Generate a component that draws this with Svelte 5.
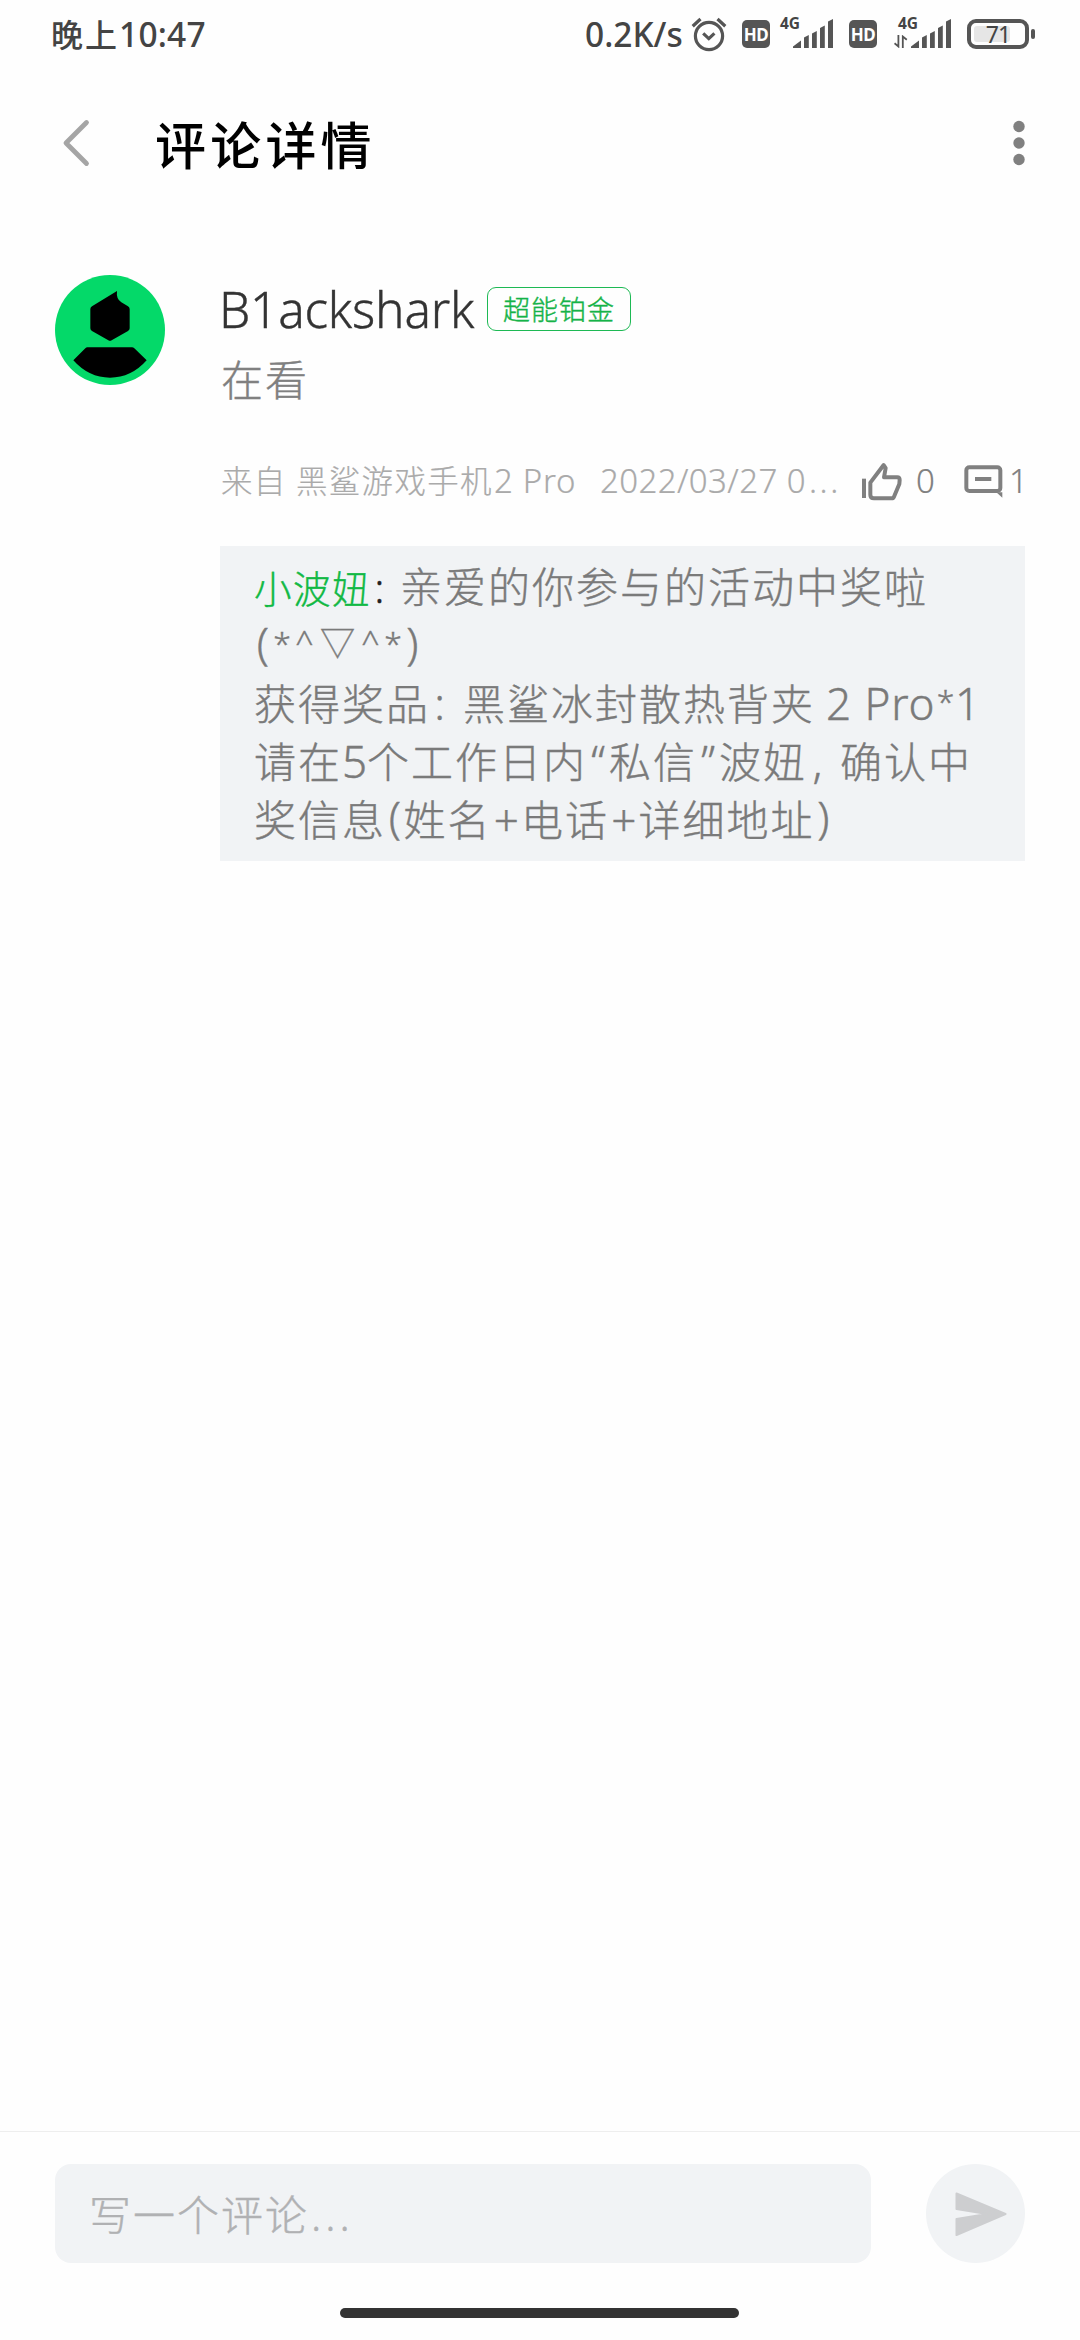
<script>
  // Reply text, split into runs; a run with a kind sits in a fixed-width cell.
  const reply = [
    [
      { t: '小波妞', k: 'author' },
      { t: ':', k: 'sep' },
      { t: '亲爱的你参与的活动中奖啦' }
    ],
    [
      { t: '(', k: 'paren' },
      { t: '*', k: 'star' },
      { t: '^', k: 'caret' },
      { t: '▽', k: 'tri' },
      { t: '^', k: 'caret' },
      { t: '*', k: 'star' },
      { t: ')', k: 'paren' }
    ],
    [
      { t: '获得奖品' },
      { t: ':', k: 'colon' },
      { t: '黑鲨冰封散热背夹' },
      { t: '2 Pro', k: 'latin' },
      { t: '*', k: 'star tight' },
      { t: '1', k: 'one' }
    ],
    [
      { t: '请在' },
      { t: '5', k: 'digit' },
      { t: '个工作日内' },
      { t: '“', k: 'quote' },
      { t: '私信' },
      { t: '”', k: 'quote' },
      { t: '波妞' },
      { t: ',', k: 'comma' },
      { t: '确认中' }
    ],
    [
      { t: '奖信息' },
      { t: '(', k: 'paren' },
      { t: '姓名' },
      { t: '+', k: 'plus' },
      { t: '电话' },
      { t: '+', k: 'plus' },
      { t: '详细地址' },
      { t: ')', k: 'paren' }
    ]
  ];
</script>

{#snippet bars()}
  <svg class="bars" width="40" height="25" viewBox="0 0 40 25">
    <path d="M0 25v-1.500L8 17.500V25zM11 25v-10.500l4.800-2.600V25zM19 25V10.400l4.800-2.400V25zM27 25V5L31.800 2.500V25zM35 25V-1.500L40-4V25z" fill="#555" />
  </svg>
{/snippet}

<div class="screen">
  <div class="status">
    <span class="time"><span class="cn">晚上</span>10:47</span>
    <span class="speed">0.2K/s</span>
    <svg class="alarm" width="36" height="36" viewBox="0 0 36 36" fill="none" stroke="#555" stroke-width="3.200">
      <circle cx="18" cy="20" r="13.600" />
      <path d="M12.200 17.400l5.600 5.200 5.600-5.200M1.700 10.200L9.500 3M26.500 3l7.800 7.200" />
    </svg>
    <span class="hd first">HD</span>
    <span class="signal one-way"><span class="net">4G</span>{@render bars()}</span>
    <span class="hd second">HD</span>
    <span class="signal two-way">
      <span class="net">4G</span>
      <svg class="arrows" width="14" height="13" viewBox="0 0 14 13" fill="none" stroke="#555" stroke-width="1.800">
        <path d="M4.400 0v11.500L.5 8.300M8.800 13V1.500l4 3.200" />
      </svg>
      {@render bars()}
    </span>
    <span class="battery"><span class="charge"></span><span class="level">71</span></span>
    <span class="nub"></span>
  </div>

  <header>
    <svg class="back" width="28" height="50" viewBox="0 0 28 50" fill="none" stroke="#a5a5a5" stroke-width="4.800" stroke-linecap="round" stroke-linejoin="round">
      <path d="M24.500 4.500L4 25l20.500 20.500" />
    </svg>
    <h1>评论详情</h1>
    <svg class="more" width="12" height="46" viewBox="0 0 12 46" fill="#808080">
      <circle cx="6" cy="6.500" r="5.700" /><circle cx="6" cy="23" r="5.700" /><circle cx="6" cy="39.500" r="5.700" />
    </svg>
  </header>

  <main>
    <svg class="avatar" width="110" height="110" viewBox="0 0 330 330">
      <circle cx="165" cy="165" r="165" fill="#04d969" />
      <path d="M186 48Q183 72 199 82L219 94Q224 97 224 102V160Q224 165 219 168L170 196Q165 199 160 196L111 168Q106 165 106 160V102Q106 97 111 94zM97 217H231Q235 217 238 220L275 256Q229 308 165 308T55 256L91 220Q94 217 97 217z" />
    </svg>
    <div class="content">
      <div class="who"><span class="name">B1ackshark</span><span class="badge">超能铂金</span></div>
      <p class="text">在看</p>
      <div class="meta">
        <span class="from">来自</span><span class="device">黑鲨游戏手机</span><span class="model">2 Pro</span>
        <span class="date">2022/03/27 0<span class="dots">...</span></span>
        <svg class="like" width="42" height="45" viewBox="0 0 126 135" fill="none" stroke="#808080" stroke-width="12">
          <path d="M6 68v58" />
          <path d="M25 80L65 27l6 9-5 28h40q7 0 7 8l-1 12-16 38q-2 5-7 5H36q-11 0-11-11z" stroke-linejoin="round" />
        </svg>
        <span class="likes">0</span>
        <svg class="reply-icon" width="39" height="33" viewBox="0 0 117 99" fill="none" stroke="#808080" stroke-width="12">
          <rect x="7" y="7" width="102" height="71" rx="9" />
          <path d="M33 42h49" />
          <path d="M97 82h18v16z" fill="#808080" stroke="none" />
        </svg>
        <span class="replies">1</span>
      </div>
      <div class="reply">
        {#each reply as line}
          <div class="line">{#each line as run}<span class={run.k ?? 'han'}>{run.t}</span>{/each}</div>
        {/each}
      </div>
    </div>
  </main>

  <footer>
    <div class="composer">
      <div class="input">写一个评论<span class="dots">...</span></div>
      <div class="send">
        <svg width="52" height="44" viewBox="0 0 52 44" fill="#cdced0" stroke="#cdced0" stroke-width="2" stroke-linejoin="round">
          <path d="M1.500 1.500L50.500 22 1.500 43V27L32 22 1.500 17z" />
        </svg>
      </div>
    </div>
    <div class="home"></div>
  </footer>
</div>

<style>
  :global(body) { background: #fefefe; }
  .screen {
    width: 1080px;
    height: 2340px;
    display: flex;
    flex-direction: column;
    overflow: hidden;
    background: #fefefe;
    font-family: 'Noto Sans', 'Noto Sans CJK SC', sans-serif;
    font-weight: 300;
    white-space: nowrap;
  }
  .screen :global(svg) { flex: none; display: block; }

  .status {
    height: 70px;
    display: flex;
    align-items: center;
    padding-left: 51px;
    color: #444;
    font-weight: 500;
  }
  .time, .speed { font-size: 33.500px; line-height: 69px; height: 70px; flex: none; }
  .time { width: 534px; letter-spacing: 0.200px; }
  .cn { font-size: 32px; letter-spacing: 2px; }
  .speed { width: 106px; }
  .alarm { margin-top: -2px; }
  .hd {
    flex: none;
    width: 28px;
    height: 28px;
    border-radius: 5px;
    background: #555;
    color: #fff;
    font: 700 17px/29px 'Noto Sans', sans-serif;
    text-align: center;
    letter-spacing: -0.500px;
    margin-top: -2px;
  }
  .hd.first { margin-left: 15px; }
  .hd.second { margin-left: 15px; }
  .signal {
    position: relative;
    flex: none;
    display: flex;
    justify-content: flex-end;
    align-items: flex-end;
    height: 31px;
    margin-top: -5px;
  }
  .signal.one-way { width: 53px; margin-left: 10px; margin-right: 1px; }
  .signal.two-way { width: 57px; margin-left: 17px; }
  .bars { overflow: visible; }
  .net { position: absolute; top: -3px; font: 700 15.500px/18px 'Noto Sans', sans-serif; }
  .one-way .net { left: 0; }
  .two-way .net { left: 4px; }
  .arrows { margin-right: 3px; }
  .battery {
    position: relative;
    flex: none;
    box-sizing: border-box;
    width: 62px;
    height: 30px;
    margin: -2px 0 0 16px;
    border: 4px solid #555;
    border-radius: 9px;
    padding: 3px;
  }
  .charge { display: block; width: 36px; height: 16px; border-radius: 3px; background: #e6e6e6; }
  .level { position: absolute; inset: 0; font: 400 23px/22px 'Noto Sans', sans-serif; text-align: center; letter-spacing: -1px; }
  .nub { width: 4px; height: 10px; margin: -2px 0 0 2px; border-radius: 2px; background: #555; }

  header { height: 146px; display: flex; align-items: center; padding: 0 55px 0 62px; }
  h1 { flex: 1; margin: 4px 0 0 65px; font-size: 51px; line-height: 70px; font-weight: 500; letter-spacing: 4.200px; color: #000; }

  main { flex: 1; display: flex; align-items: flex-start; padding: 59px 55px 0; }
  .content { width: 805px; margin-left: 55px; -webkit-text-stroke-width: 0.400px; }
  .who { display: flex; height: 72px; }
  .name { width: 264px; font-size: 49.500px; line-height: 69px; letter-spacing: -0.200px; color: #333; text-indent: -1px; }
  .badge {
    box-sizing: border-box;
    width: 144px;
    height: 44px;
    margin: 12px 0 0 3px;
    border: 1.500px solid #1db954;
    border-radius: 9px;
    color: #15b348;
    font-size: 27px;
    line-height: 43px;
    letter-spacing: 1px;
    text-align: center;
  }
  .text { margin: 1px 0 0 1px; font-size: 42px; line-height: 63px; letter-spacing: 2px; color: #808080; }
  .meta { display: flex; align-items: center; height: 60px; margin-top: 40px; font-size: 33px; line-height: 60px; color: #aaa; -webkit-text-stroke-width: 0.200px; }
  .meta > span { flex: none; }
  .from { width: 76px; padding-left: 1px; box-sizing: border-box; }
  .from, .device { font-size: 31.500px; letter-spacing: 1.300px; }
  .device { width: 198px; }
  .model { width: 106px; letter-spacing: 0.700px; }
  .date { width: 262px; letter-spacing: 0.400px; }
  .meta .dots { letter-spacing: 2.600px; margin-left: 3px; }
  .like { margin-top: -6px; }
  .likes, .replies { color: #808080; }
  .likes { width: 48px; margin-left: 12px; }
  .replies { margin-left: 6px; }

  .reply { box-sizing: border-box; height: 315px; margin-top: 35px; padding: 12px 0 0 34px; background: #f1f3f5; color: #7a7a7a; font-size: 44px; }
  .line { display: flex; align-items: baseline; height: 58px; line-height: 58px; }
  .line span { flex: none; text-align: center; }
  .line .han { font-size: 42px; letter-spacing: 2px; text-align: left; }
  .line .author { font-size: 37.500px; letter-spacing: 1.500px; color: #11b944; }
  .line .sep { width: 29px; padding-right: 12px; box-sizing: border-box; font-size: 40px; color: #222; }
  .line .colon { width: 33px; padding-right: 14px; box-sizing: border-box; }
  .line .paren { width: 17.500px; align-self: flex-start; line-height: 54px; }
  .line .star { width: 21px; font-size: 32px; align-self: flex-start; line-height: 54px; }
  .line .star.tight { width: 19px; }
  .line .caret { width: 24px; font-size: 32px; align-self: flex-start; line-height: 51px; }
  .line .tri { width: 42px; font-size: 35px; align-self: flex-start; line-height: 54px; }
  .line .latin { width: 121px; box-sizing: border-box; padding-left: 11px; text-align: left; letter-spacing: 0.900px; }
  .line .one { width: 22px; text-align: left; }
  .line .digit { width: 25px; }
  .line .quote { width: 22px; }
  .line .comma { width: 33px; padding-right: 12px; box-sizing: border-box; }
  .line .plus { width: 29.500px; }

  footer { height: 209px; box-sizing: border-box; border-top: 1px solid #eee; }
  .composer { display: flex; padding: 32px 55px 0; gap: 55px; }
  .input { flex: 1; height: 99px; padding-left: 34px; border-radius: 16px; background: #f1f3f5; color: #b0b1b3; font-size: 42px; line-height: 101px; letter-spacing: 2px; -webkit-text-stroke-width: 0.400px; }
  .input .dots { letter-spacing: 4px; margin-left: 2px; }
  .send { width: 99px; height: 99px; box-sizing: border-box; padding-left: 10px; border-radius: 50%; background: #f1f3f5; display: flex; align-items: center; justify-content: center; }
  .home { width: 399px; height: 10px; margin: 45px 0 0 340px; border-radius: 5px; background: #333; }
</style>
